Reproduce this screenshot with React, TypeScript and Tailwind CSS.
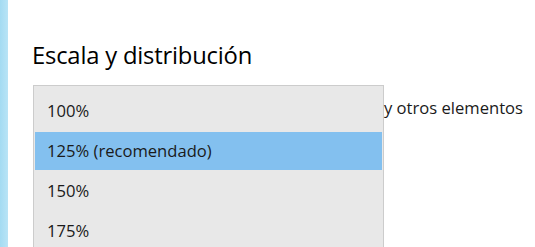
export default function App() {
  const items = ["100%", "125% (recomendado)", "150%", "175%"];
  const selected = 1;
  return (
    <div
      className="flex h-[247px] w-[535px] overflow-hidden bg-white text-[#1a1a1a]"
      style={{ fontFamily: '"Open Sans", "Noto Sans", sans-serif' }}
    >
      <div className="w-[8px] shrink-0 bg-gradient-to-r from-[#a4dbf2] to-[#b9e4f6]" />
      <div className="flex min-w-0 flex-1 flex-col pl-[24px] pt-[39px]">
        <h2 className="text-[23.8px] leading-[32px] tracking-[-0.2px] text-black">
          Escala y distribución
        </h2>
        <div className="mt-[14px] flex items-start">
          <ul className="ml-[1px] h-[200px] w-[351px] shrink-0 border border-[#cccccc] bg-[#e8e8e8] px-px pt-[5px] text-[16.6px]">
            {items.map((item, i) => (
              <li key={item} className="h-[40px] py-px">
                <div
                  className={`flex h-full items-center pl-[12px] ${
                    i === selected ? "bg-[#83c0ef]" : ""
                  }`}
                >
                  {item}
                </div>
              </li>
            ))}
          </ul>
          <span className="mt-[11px] whitespace-nowrap text-[16.6px] leading-[24px]">
            y otros elementos
          </span>
        </div>
      </div>
    </div>
  );
}
